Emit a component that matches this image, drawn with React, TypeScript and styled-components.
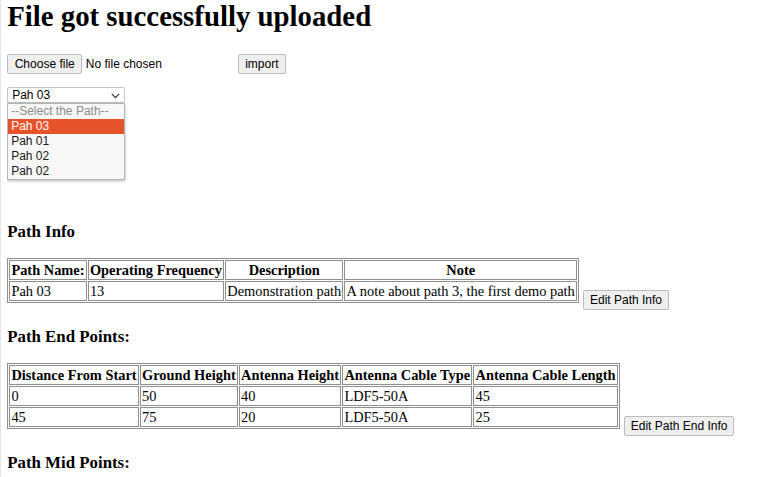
import React from "react";
import styled, { createGlobalStyle } from "styled-components";

const GlobalStyle = createGlobalStyle`
  html {
    min-height: 100%;
    background: #ffffff;
    box-shadow: inset 1px 0 0 #e6e6e6;
  }
  body {
    margin: 0 7.2px;
    font-family: "Liberation Serif", "Times New Roman", serif;
    font-size: 14.4px;
    color: #000;
  }
`;

const Page = styled.div`
  display: flex;
  flex-direction: column;
  align-items: flex-start;
`;

const Title = styled.h1`
  margin: 0 0 19.3px;
  font-family: "Liberation Serif", serif;
  font-size: 28.8px;
  font-weight: 700;
  line-height: normal;
`;

const UploadRow = styled.div`
  display: flex;
  align-items: center;
  margin-top: 1.4px;
`;

const Button = styled.button`
  appearance: none;
  box-sizing: border-box;
  display: inline-flex;
  align-items: center;
  height: 20px;
  padding: 0 6px;
  font-family: "Liberation Sans", Arial, sans-serif;
  font-size: 12px;
  color: #000;
  background: #efefef;
  border: 1px solid #bcbcbc;
  border-radius: 2px;
  line-height: 1;
  white-space: nowrap;
  cursor: default;
`;

const FilePicker = styled.label`
  display: flex;
  align-items: center;
  gap: 3.6px;
  width: 227px;
  margin-right: 4px;
  font-family: "Liberation Sans", Arial, sans-serif;
  font-size: 12px;
  color: #000;
`;

const ChooseButton = styled(Button).attrs({ as: "span" })`
  padding: 0 6.5px;
`;

const HiddenFile = styled.input`
  display: none;
`;

const SelectWrap = styled.div`
  position: relative;
  margin-top: 13.5px;
  margin-bottom: 102.4px;
  width: 118px;
`;

const SelectBox = styled.select`
  appearance: none;
  box-sizing: border-box;
  display: block;
  width: 118px;
  height: 16px;
  padding: 0 0 0 4px;
  font-family: "Liberation Sans", Arial, sans-serif;
  font-size: 12px;
  color: #000;
  background: #fff;
  border: 1px solid #c6c6c6;
  border-radius: 2px;
  line-height: 14px;
`;

const Chevron = styled.svg`
  position: absolute;
  right: 5px;
  top: 6px;
  pointer-events: none;
`;

const OptionList = styled.ul`
  position: absolute;
  top: 16px;
  left: 0;
  box-sizing: border-box;
  width: 118px;
  margin: 0;
  padding: 0;
  list-style: none;
  background: #f7f7f7;
  border: 1px solid #b4b4b4;
  box-shadow: 0 1px 3px rgba(0, 0, 0, 0.28);
`;

const OptionItem = styled.li<{ $active?: boolean; $disabled?: boolean }>`
  height: 15px;
  padding-left: 3px;
  font-family: "Liberation Sans", Arial, sans-serif;
  font-size: 12px;
  line-height: 15px;
  white-space: nowrap;
  background: ${(p) => (p.$active ? "#e6522a" : "transparent")};
  color: ${(p) => (p.$active ? "#ffffff" : p.$disabled ? "#8c8c8c" : "#1a1a1a")};
`;

const SectionTitle = styled.h3`
  margin: 16.85px 0 16px;
  font-family: "Liberation Serif", serif;
  font-size: 16.85px;
  font-weight: 700;
  line-height: normal;
`;

const TableRow = styled.div`
  display: flex;
  align-items: flex-end;
  gap: 4px;
`;

const DataTable = styled.table`
  border-collapse: separate;
  border-spacing: 1px;
  border: 1px solid #8f8f8f;
  margin-bottom: 7px;
  font-family: "Liberation Serif", serif;
  font-size: 14.4px;
`;

const HeadCell = styled.th`
  border: 1px solid #8f8f8f;
  padding: 1px 1.2px;
  line-height: 16px;
  font-weight: 700;
  text-align: center;
  white-space: nowrap;
`;

const Cell = styled.td`
  border: 1px solid #8f8f8f;
  padding: 1px 1.2px;
  line-height: 16px;
  text-align: left;
  white-space: nowrap;
`;

const pathOptions = [
  { label: "--Select the Path--", disabled: true },
  { label: "Pah 03", active: true },
  { label: "Pah 01" },
  { label: "Pah 02" },
  { label: "Pah 02" },
];

const infoHead = ["Path Name:", "Operating Frequency", "Description", "Note"];
const infoRows = [["Pah 03", "13", "Demonstration path", "A note about path 3, the first demo path"]];

const endHead = [
  "Distance From Start",
  "Ground Height",
  "Antenna Height",
  "Antenna Cable Type",
  "Antenna Cable Length",
];
const endRows = [
  ["0", "50", "40", "LDF5-50A", "45"],
  ["45", "75", "20", "LDF5-50A", "25"],
];

function InfoTable({ head, rows }: { head: string[]; rows: string[][] }) {
  return (
    <DataTable>
      <tbody>
        <tr>
          {head.map((h) => (
            <HeadCell key={h}>{h}</HeadCell>
          ))}
        </tr>
        {rows.map((r, i) => (
          <tr key={i}>
            {r.map((c, j) => (
              <Cell key={j}>{c}</Cell>
            ))}
          </tr>
        ))}
      </tbody>
    </DataTable>
  );
}

export default function App() {
  return (
    <>
      <GlobalStyle />
      <Page>
        <Title>File got successfully uploaded</Title>
        <UploadRow>
          <FilePicker>
            <HiddenFile type="file" />
            <ChooseButton>Choose file</ChooseButton>
            <span>No file chosen</span>
          </FilePicker>
          <Button>import</Button>
        </UploadRow>
        <SelectWrap>
          <SelectBox defaultValue="p3">
            <option value="" disabled>
              --Select the Path--
            </option>
            <option value="p3">Pah 03</option>
            <option value="p1">Pah 01</option>
            <option value="p2">Pah 02</option>
            <option value="p2b">Pah 02</option>
          </SelectBox>
          <Chevron width="9" height="6" viewBox="0 0 9 6">
            <polyline points="0.8,0.8 4.5,4.6 8.2,0.8" fill="none" stroke="#333" strokeWidth="1.2" />
          </Chevron>
          <OptionList>
            {pathOptions.map((o, i) => (
              <OptionItem key={i} $active={o.active} $disabled={o.disabled}>
                {o.label}
              </OptionItem>
            ))}
          </OptionList>
        </SelectWrap>

        <SectionTitle>Path Info</SectionTitle>
        <TableRow>
          <InfoTable head={infoHead} rows={infoRows} />
          <Button>Edit Path Info</Button>
        </TableRow>

        <SectionTitle>Path End Points:</SectionTitle>
        <TableRow>
          <InfoTable head={endHead} rows={endRows} />
          <Button>Edit Path End Info</Button>
        </TableRow>

        <SectionTitle>Path Mid Points:</SectionTitle>
      </Page>
    </>
  );
}
